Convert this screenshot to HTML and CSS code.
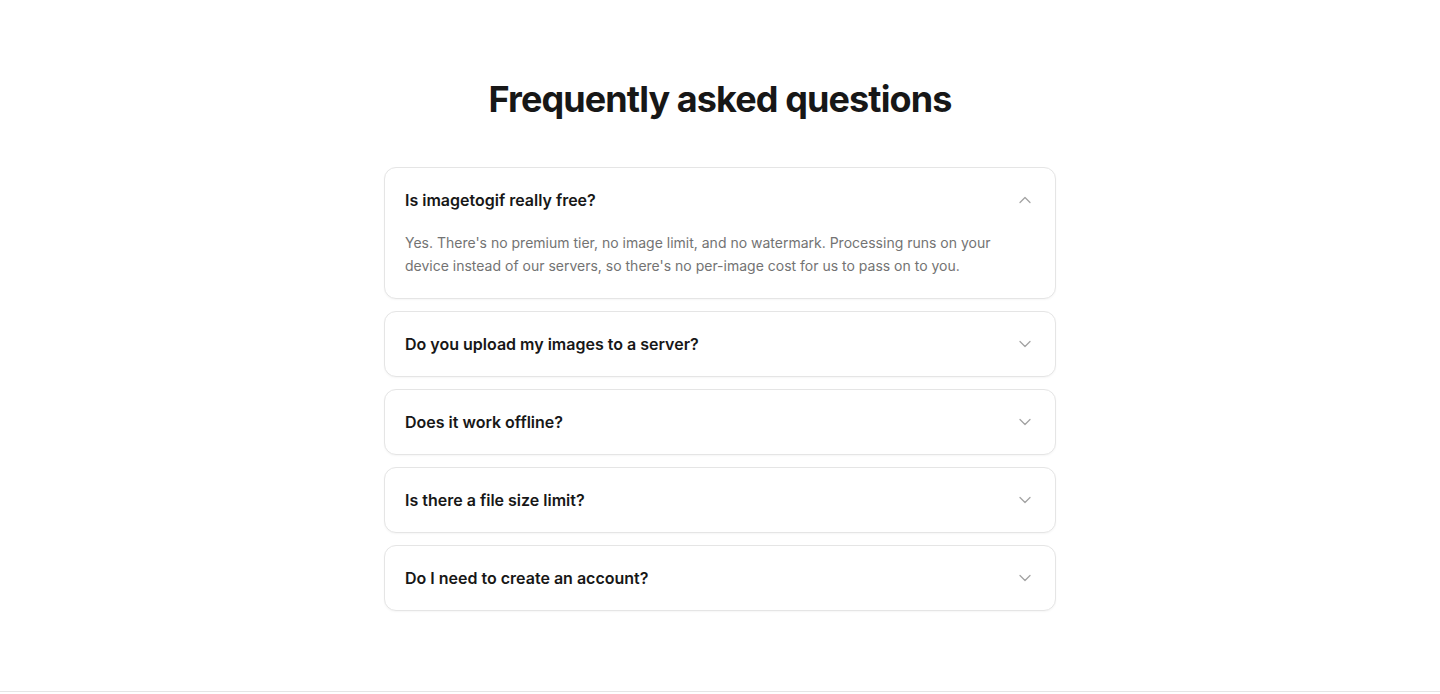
FILE: index.html
```html
<!DOCTYPE html>
<html lang="en">
<head>
<meta charset="UTF-8">
<meta name="viewport" content="width=device-width, initial-scale=1.0">
<title>FAQ - imagetogif</title>
<link rel="stylesheet" href="styles.css">
</head>
<body>
<section class="faq">
    <h2 class="faq-title">Frequently asked questions</h2>
    <div class="faq-list">
        <div class="faq-item open">
            <button class="faq-question">
                <span>Is imagetogif really free?</span>
                <svg class="chevron" viewBox="0 0 24 24"><path d="m6 15 6-6 6 6"/></svg>
            </button>
            <p class="faq-answer">Yes. There's no premium tier, no image limit, and no watermark. Processing runs on your device instead of our servers, so there's no per-image cost for us to pass on to you.</p>
        </div>
        <div class="faq-item">
            <button class="faq-question">
                <span>Do you upload my images to a server?</span>
                <svg class="chevron" viewBox="0 0 24 24"><path d="m6 9 6 6 6-6"/></svg>
            </button>
        </div>
        <div class="faq-item">
            <button class="faq-question">
                <span>Does it work offline?</span>
                <svg class="chevron" viewBox="0 0 24 24"><path d="m6 9 6 6 6-6"/></svg>
            </button>
        </div>
        <div class="faq-item">
            <button class="faq-question">
                <span>Is there a file size limit?</span>
                <svg class="chevron" viewBox="0 0 24 24"><path d="m6 9 6 6 6-6"/></svg>
            </button>
        </div>
        <div class="faq-item">
            <button class="faq-question">
                <span>Do I need to create an account?</span>
                <svg class="chevron" viewBox="0 0 24 24"><path d="m6 9 6 6 6-6"/></svg>
            </button>
        </div>
    </div>
</section>
<footer class="site-footer"></footer>
</body>
</html>
```

FILE: styles.css
```css
body {
    margin: 0;
    font-family: Inter, "Noto Sans", sans-serif;
    color: #171717;
    background: #fff;
}

.faq {
    padding: 79px 16px 80px;
}

.faq-title {
    margin: 0 0 48px;
    text-align: center;
    font-size: 36px;
    line-height: 40px;
    font-weight: 700;
    letter-spacing: -0.025em;
}

.faq-list {
    max-width: 672px;
    margin: 0 auto;
    display: flex;
    flex-direction: column;
    gap: 12px;
}

.faq-item {
    border: 1px solid #e5e5e5;
    border-radius: 12px;
    background: #fff;
    box-shadow: 0 1px 2px rgba(0, 0, 0, 0.04);
}

.faq-question {
    width: 100%;
    display: flex;
    justify-content: space-between;
    align-items: center;
    padding: 20px;
    border: 0;
    background: none;
    font: inherit;
    font-size: 16px;
    line-height: 24px;
    font-weight: 600;
    color: #171717;
    text-align: left;
    cursor: pointer;
}

.chevron {
    width: 20px;
    height: 20px;
    fill: none;
    stroke: #a3a3a3;
    stroke-width: 1.5;
    stroke-linecap: round;
    stroke-linejoin: round;
    flex-shrink: 0;
}

.faq-answer {
    margin: 0;
    padding: 0 20px 20px;
    font-size: 14px;
    line-height: 1.625;
    color: #737373;
}

.site-footer {
    border-top: 1px solid #e5e5e5;
    height: 40px;
}
```
